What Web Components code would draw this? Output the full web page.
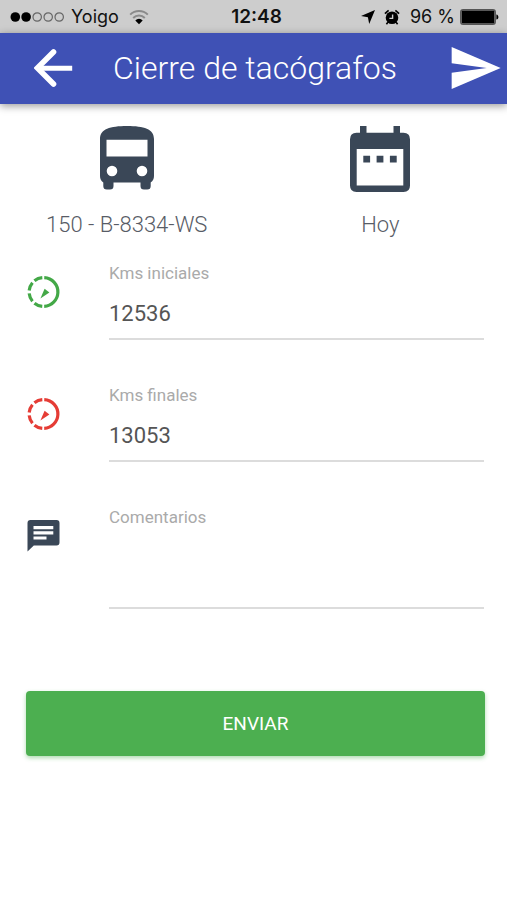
<!DOCTYPE html>
<html lang="es">
<head>
<meta charset="utf-8">
<meta name="viewport" content="width=device-width, initial-scale=1">
<title>Cierre de tacógrafos</title>
<style>
    body {
        margin: 0;
        background: #fff;
        font-family: Roboto, "Liberation Sans", sans-serif;
    }
</style>
</head>
<body>
<tacho-page></tacho-page>

<template id="status-bar">
<style>
    :host {
        display: grid;
        grid-template-columns: 1fr auto 1fr;
        align-items: center;
        height: 33px;
        padding: 0 8px 0 10px;
        background: #cdcdcd;
        color: #111;
        font-family: Inter, "Liberation Sans", sans-serif;
        font-size: 18px;
        line-height: 24px;
    }
    .side {
        display: flex;
        align-items: center;
    }
    .left {
        gap: 6px;
    }
    .right {
        justify-content: flex-end;
        gap: 5px;
    }
    .wifi {
        margin-left: 4px;
    }
    .alarm {
        margin: 0 5px 0 4px;
    }
    .time {
        padding-left: 4px;
        font-size: 19px;
        font-weight: 600;
    }
    svg {
        display: block;
        flex: none;
    }
</style>
<div class="side left">
    <svg width="55" height="12" viewBox="0 0 55 12" fill="none" stroke="#666" stroke-width="1.2">
        <circle cx="5.3" cy="6" r="4.8" fill="#000" stroke="none"/>
        <circle cx="16.1" cy="6" r="4.8" fill="#000" stroke="none"/>
        <circle cx="27.2" cy="6" r="4.2"/>
        <circle cx="38.2" cy="6" r="4.2"/>
        <circle cx="49.2" cy="6" r="4.2"/>
    </svg>
    <span>Yoigo</span>
    <svg class="wifi" width="20" height="16" viewBox="0 0 20 16" fill="none" stroke="#8a8a8a" stroke-width="2">
        <path d="M1.2 5.6a12.6 12.6 0 0 1 17.6 0"/>
        <path d="M4.2 9a8.2 8.2 0 0 1 11.6 0"/>
        <path d="M6.3 11.4a5.2 5.2 0 0 1 7.4 0L10 15.2z" fill="#000" stroke="none"/>
    </svg>
</div>
<span class="time">12:48</span>
<div class="side right">
    <svg width="14" height="14" viewBox="0 0 14 14"><path d="M14 0 8.2 14 6.9 7.2 0 6z" fill="#000"/></svg>
    <svg class="alarm" width="16" height="16" viewBox="0 0 16 16">
        <circle cx="8" cy="8.7" r="6.3" fill="#000"/>
        <path d="M.9 4.6 4.6 1.4M11.4 1.4l3.7 3.2M3.9 13.2l-1.5 2M12.1 13.2l1.5 2" stroke="#000" stroke-width="1.6" fill="none"/>
        <path d="M8.6 5.4v4H5.4" stroke="#cdcdcd" stroke-width="1.4" fill="none"/>
    </svg>
    <span>96 %</span>
    <svg width="39" height="16" viewBox="0 0 39 16">
        <rect x=".7" y=".7" width="34.6" height="14.6" rx="2.4" fill="none" stroke="#555" stroke-width="1.3"/>
        <rect x="1.6" y="1.6" width="32.800" height="12.800" rx="1" fill="#000"/>
        <path d="M36.4 5.4c2.6.6 2.6 4.6 0 5.2z" fill="#000"/>
    </svg>
</div>
</template>

<template id="nav-bar">
<style>
    :host {
        display: flex;
        align-items: center;
        box-sizing: border-box;
        height: 71px;
        padding: 0 4px 2px 34px;
        background: #3f51b5;
        color: #fff;
        box-shadow: 0 2px 8px rgba(0, 0, 0, 0.4);
    }
    button {
        display: block;
        flex: none;
        padding: 0;
        border: 0;
        background: none;
        color: inherit;
    }
    h1 {
        flex: 1;
        margin: 0 0 0 39px;
        font-size: 32px;
        font-weight: 300;
        line-height: 40px;
        white-space: nowrap;
    }
    svg {
        display: block;
    }
</style>
<button type="button" aria-label="Volver">
    <svg width="40" height="40" viewBox="0 0 40 40" fill="none" stroke="currentColor">
        <path d="M19.5 4 3.4 20l16.1 16" stroke-width="5.6" stroke-linecap="round"/>
        <path d="M4 20.2h34.2" stroke-width="5"/>
    </svg>
</button>
<h1><slot></slot></h1>
<button type="button" aria-label="Enviar">
    <svg width="56" height="56" viewBox="0 0 24 24"><path d="M2 21 23 12 2 3v7l15 2-15 2z" fill="currentColor"/></svg>
</button>
</template>

<template id="info-tile">
<style>
    :host {
        display: flex;
        flex-direction: column;
        align-items: center;
        gap: 17px;
        color: #585c66;
        font-size: 22px;
        font-weight: 300;
        line-height: 32px;
    }
    .icon {
        height: 66px;
    }
</style>
<div class="icon"><slot name="icon"></slot></div>
<slot></slot>
</template>

<template id="form-field">
<style>
    :host {
        display: grid;
        grid-template-columns: 32px 1fr;
        column-gap: 50px;
    }
    .icon {
        height: 32px;
        margin-top: 13px;
    }
    .box {
        display: flex;
        flex-direction: column;
        gap: 8px;
        min-width: 0;
    }
    label {
        color: #aaa;
        font-size: 17px;
        line-height: 20px;
    }
    input, textarea {
        display: block;
        box-sizing: border-box;
        width: 100%;
        height: 49px;
        margin: 0;
        padding: 0 0 3px;
        border: 0;
        border-bottom: 2px solid #dcdcdc;
        border-radius: 0;
        outline: 0;
        background: none;
        color: #555;
        font: 22px Roboto, "Liberation Sans", sans-serif;
    }
    textarea {
        height: 74px;
        resize: none;
    }
</style>
<div class="icon"><slot></slot></div>
<div class="box"><label for="control"></label></div>
</template>

<template id="submit-button">
<style>
    :host {
        display: block;
    }
    button {
        display: block;
        width: 100%;
        height: 65px;
        padding: 0;
        border: 0;
        border-radius: 4px;
        background: #4caf50;
        color: #fff;
        font: 19px Roboto, "Liberation Sans", sans-serif;
        box-shadow: 0 2px 4px rgba(76, 175, 80, 0.45);
    }
</style>
<button type="button"><slot></slot></button>
</template>

<template id="speed-icon">
<style>
    :host {
        display: block;
    }
    svg {
        display: block;
    }
</style>
<svg width="33" height="32" viewBox="0 0 33 32">
    <circle cx="16.5" cy="16" r="14.4" pathLength="360" transform="rotate(-87 16.5 16)"
        fill="none" stroke="currentColor" stroke-width="3.2"
        stroke-dasharray="174 8 34 11 34 12 34 11 34 8"/>
    <path d="M13.4 22.6 17.6 12.8l4.8 3.6z" fill="currentColor"/>
</svg>
</template>

<template id="tacho-page">
<style>
    :host {
        display: block;
    }
    svg {
        display: block;
        fill: #3a4757;
    }
    .tiles {
        display: grid;
        grid-template-columns: 1fr 1fr;
        padding-top: 22px;
    }
    form {
        display: flex;
        flex-direction: column;
        gap: 45px;
        padding: 22px 23px 0 27px;
    }
    .green {
        color: #43a847;
    }
    .red {
        color: #e53c35;
    }
    submit-button {
        margin: 82px 22px 32px 26px;
    }
</style>
<status-bar></status-bar>
<nav-bar>Cierre de tacógrafos</nav-bar>
<main>
    <div class="tiles">
        <info-tile>
            <svg slot="icon" width="54" height="66" viewBox="0 0 54 66">
                <path fill-rule="evenodd" d="M0 13C0 3 10 0 27 0s27 3 27 13v37q0 4-3.3 6.500V60q0 3.500-3.500 3.500h-3.200q-3.500 0-3.500-3.500v-3.500h-27V60q0 3.500-3.500 3.500H6.800q-3.500 0-3.500-3.500v-3.500Q0 54 0 50zM6.500 13.700v16.800h41V13.700zM12 39.700a5.300 5.300 0 1 0 0 10.600 5.300 5.300 0 0 0 0-10.600zM42 39.700a5.300 5.300 0 1 0 0 10.600 5.300 5.300 0 0 0 0-10.600z"/>
            </svg>
            150 - B-8334-WS
        </info-tile>
        <info-tile>
            <svg slot="icon" width="60" height="66" viewBox="0 0 60 66">
                <path fill-rule="evenodd" d="M10 0h6.500v6.700h27V0H50v6.700h3.500Q60 6.700 60 13.200v46.300Q60 66 53.500 66h-47Q0 66 0 59.500V13.200Q0 6.700 6.500 6.700H10zM6.700 23v36.500h46.600V23z"/>
                <path d="M13.300 29.700h6.800v6.800h-6.800zM26.600 29.700h6.800v6.800h-6.800zM39.900 29.700h6.800v6.800h-6.800z"/>
            </svg>
            Hoy
        </info-tile>
    </div>
    <form>
        <form-field label="Kms iniciales" value="12536"><speed-icon class="green"></speed-icon></form-field>
        <form-field label="Kms finales" value="13053"><speed-icon class="red"></speed-icon></form-field>
        <form-field label="Comentarios" multiline>
            <svg width="33" height="32" viewBox="0 0 33 32">
                <path fill-rule="evenodd" d="M3.500 0h26Q32.500 0 32.500 3v19.500q0 3-3 3H6.800L.5 31.500V3q0-3 3-3zM6.500 6v3.200h19.800V6zM6.500 11.200v3.200h19.800v-3.200zM6.500 16.400v3.200h13v-3.200z"/>
            </svg>
        </form-field>
    </form>
    <submit-button>ENVIAR</submit-button>
</main>
</template>

<script>
class BaseElement extends HTMLElement {
    constructor() {
        super();
        const template = document.getElementById(this.localName);
        this.attachShadow({ mode: "open" }).append(template.content.cloneNode(true));
    }
}

class FormField extends BaseElement {
    connectedCallback() {
        if (this.control) {return}
        const multiline = this.hasAttribute("multiline");
        this.control = document.createElement(multiline ? "textarea" : "input");
        this.control.id = "control";
        if (!multiline) {
            this.control.type = "text";
            this.control.inputMode = "numeric";
        }
        this.control.value = this.getAttribute("value") || "";

        this.shadowRoot.querySelector("label").textContent = this.getAttribute("label");
        this.shadowRoot.querySelector(".box").append(this.control);
    }
}

customElements.define("status-bar", class extends BaseElement {});
customElements.define("nav-bar", class extends BaseElement {});
customElements.define("info-tile", class extends BaseElement {});
customElements.define("speed-icon", class extends BaseElement {});
customElements.define("submit-button", class extends BaseElement {});
customElements.define("form-field", FormField);
customElements.define("tacho-page", class extends BaseElement {});
</script>
</body>
</html>
